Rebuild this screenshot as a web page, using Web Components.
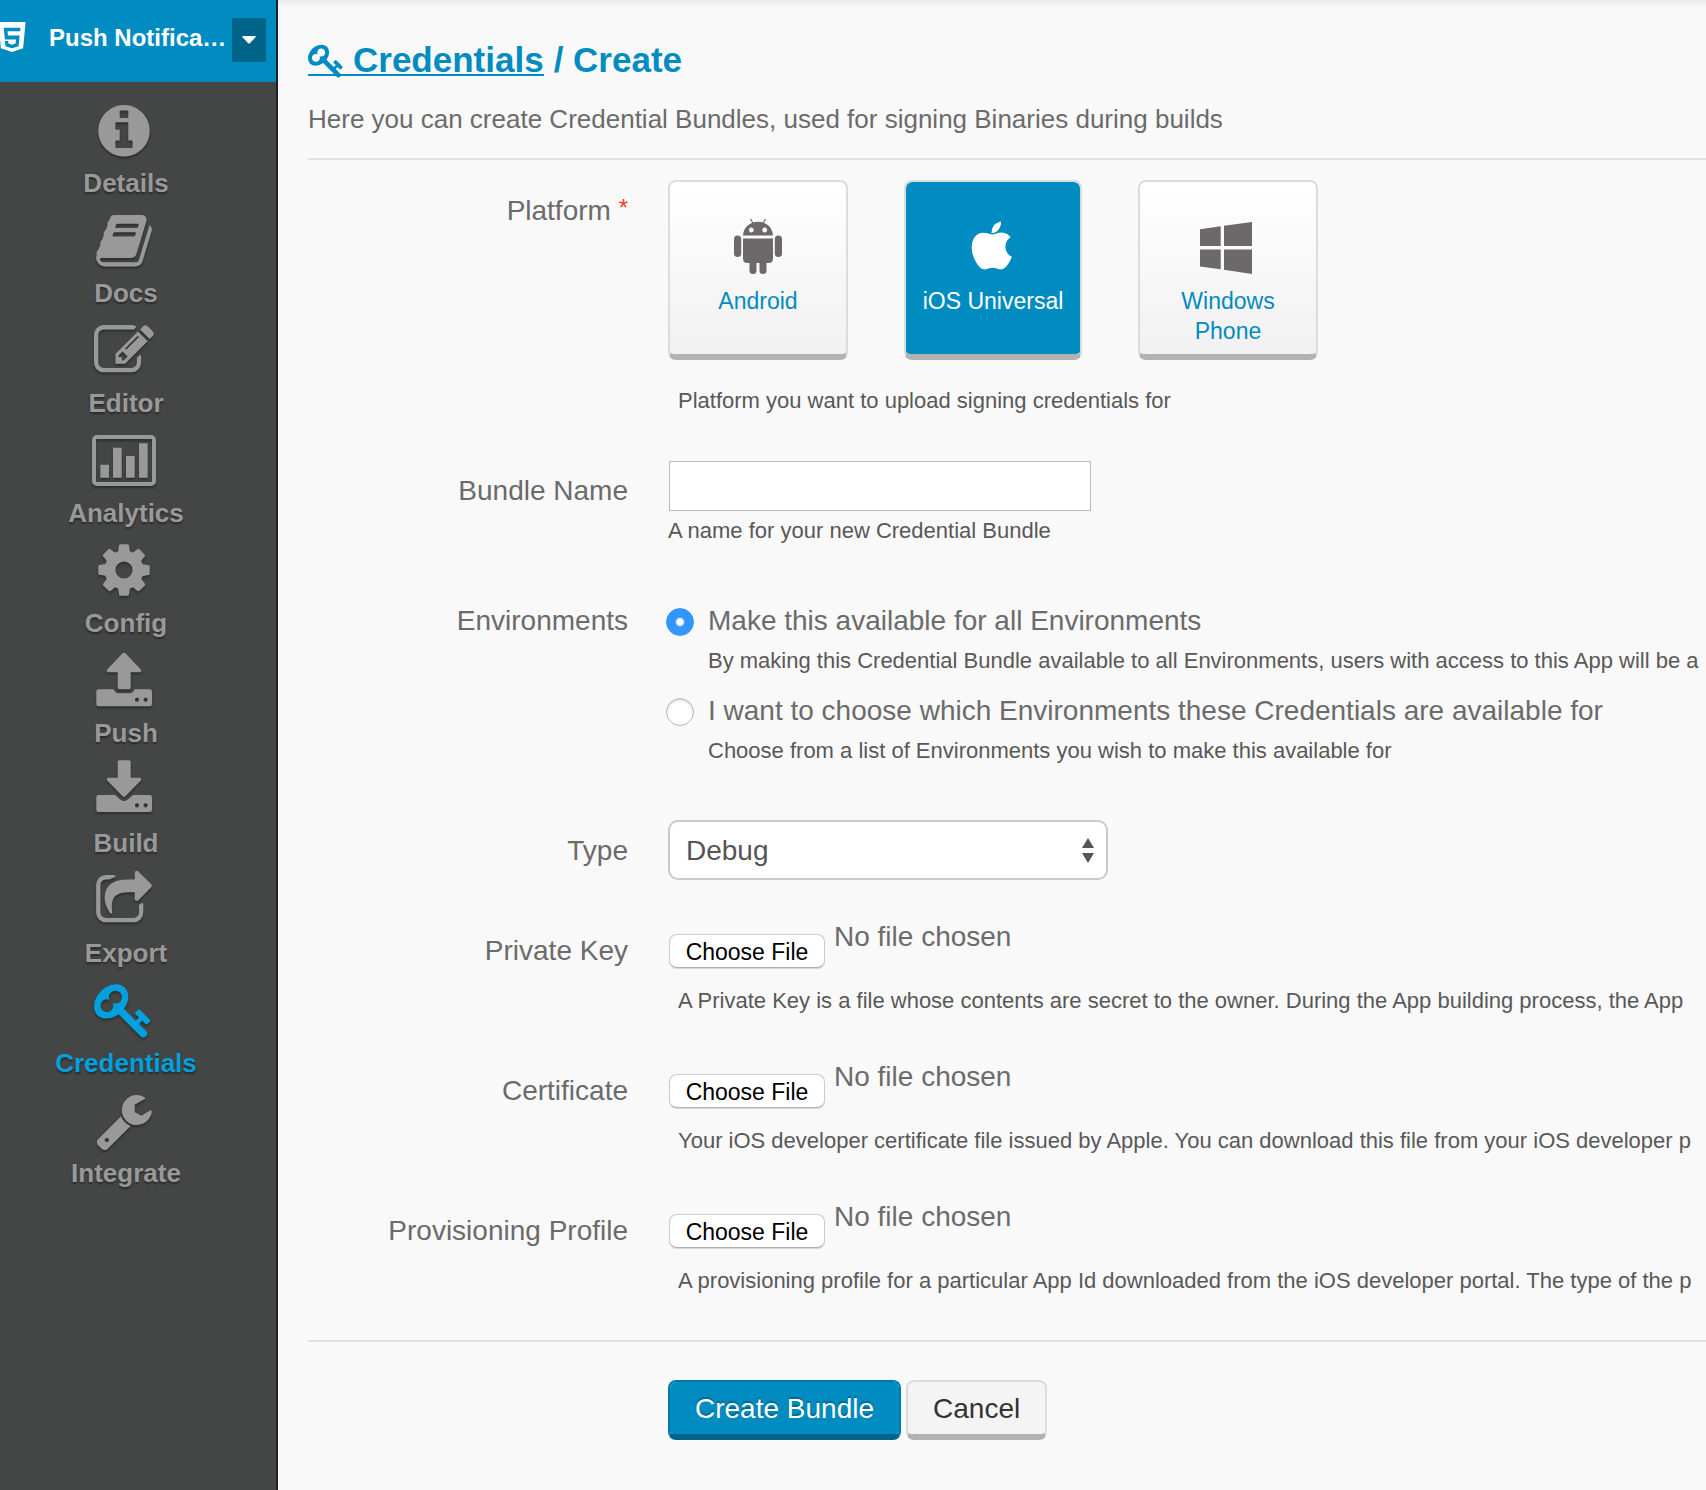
<!DOCTYPE html>
<html lang="en">
<head>
<meta charset="utf-8">
<title>Credentials / Create</title>
<style>
  html, body { margin: 0; }
  body { font-family: "Liberation Sans", Arial, sans-serif; background: #f9f9f9; color: #6b6b6b; }
</style>
</head>
<body>
<app-shell>
  <side-bar slot="side" name="Push Notifica…">
    <nav-item icon="info">Details</nav-item>
    <nav-item icon="book">Docs</nav-item>
    <nav-item icon="edit">Editor</nav-item>
    <nav-item icon="chart">Analytics</nav-item>
    <nav-item icon="cog">Config</nav-item>
    <nav-item icon="upload">Push</nav-item>
    <nav-item icon="download">Build</nav-item>
    <nav-item icon="share">Export</nav-item>
    <nav-item icon="key" current>Credentials</nav-item>
    <nav-item icon="wrench">Integrate</nav-item>
  </side-bar>
  <page-heading section="Credentials" page="Create">Here you can create Credential Bundles, used for signing Binaries during builds</page-heading>
  <credential-form></credential-form>
</app-shell>

<script>
const ICONS = {
  info: ['0 -24 1792 1792', '<path d="M1152 1376v-160q0-14-9-23t-23-9h-96v-512q0-14-9-23t-23-9h-320q-14 0-23 9t-9 23v160q0 14 9 23t23 9h96v320h-96q-14 0-23 9t-9 23v160q0 14 9 23t23 9h448q14 0 23-9t9-23zm-128-896v-160q0-14-9-23t-23-9h-192q-14 0-23 9t-9 23v160q0 14 9 23t23 9h192q14 0 23-9t9-23zm640 416q0 209-103 385.5t-279.5 279.5-385.5 103-385.5-103-279.5-279.5-103-385.5 103-385.5 279.5-279.5 385.5-103 385.5 103 279.5 279.5 103 385.5z"/>'],
  book: ['0 -24 1792 1792', '<path d="M1703 478q40 57 18 129l-275 906q-19 64-76.5 107.5t-122.5 43.5h-923q-77 0-148.5-53.5t-99.5-131.5q-24-67-2-127 0-4 3-27t4-37q1-8-3-21.5t-3-19.5q2-11 8-21t16.5-23.5 16.5-23.5q23-38 45-91.5t30-91.5q3-10 .5-30t-.5-28q3-11 17-28t17-23q21-36 42-92t25-90q1-9-2.5-32t.5-28q4-13 22-30.5t22-22.5q19-26 42.5-84.5t27.5-96.5q1-8-3-25.5t-2-26.5q2-8 9-18t18-23 17-21q8-12 16.5-30.5t15-35 16-36 19.5-32 26.5-23.5 36-11.5 47.5 5.5l-1 3q38-9 51-9h761q74 0 114 56t18 130l-274 906q-36 119-71.5 153.5t-128.5 34.5h-869q-27 0-38 15-11 16-1 43 24 70 144 70h923q29 0 56-15.5t35-41.5l300-987q7-22 5-57 38 15 59 43zm-1064 2q-4 13 2 22.5t20 9.5h608q13 0 25.5-9.5t16.5-22.5l21-64q4-13-2-22.5t-20-9.5h-608q-13 0-25.5 9.5t-16.5 22.5zm-83 256q-4 13 2 22.5t20 9.5h608q13 0 25.5-9.5t16.5-22.5l21-64q4-13-2-22.5t-20-9.5h-608q-13 0-25.5 9.5t-16.5 22.5z"/>'],
  edit: ['0 -24 1792 1792', '<path d="M888 1184l116-116-152-152-116 116v56h96v96h56zm440-720q-16-16-33 1l-350 350q-17 17-1 33t33-1l350-350q17-17 1-33zm80 594v190q0 119-84.5 203.5t-203.5 84.5h-832q-119 0-203.5-84.5t-84.5-203.5v-832q0-119 84.5-203.5t203.5-84.5h832q63 0 117 25 15 7 18 23 3 17-9 29l-49 49q-14 14-32 8-23-6-45-6h-832q-66 0-113 47t-47 113v832q0 66 47 113t113 47h832q66 0 113-47t47-113v-126q0-13 9-22l64-64q15-15 35-7t20 29zm-96-738l288 288-672 672h-288v-288zm444 132l-92 92-288-288 92-92q28-28 68-28t68 28l152 152q28 28 28 68t-28 68z"/>'],
  chart: ['0 0 64 60', '<rect x="2" y="7" width="60" height="47" rx="3" fill="none" stroke="currentColor" stroke-width="4"/><path d="M8.3 34.7h8.7v13H8.3zM21 17.7h8.7v30H21zM34 26h8.7v21.7H34zM47 13.3h8.7v34.4H47z"/>'],
  cog: ['0 0 1792 1792', '<path d="M1152 896q0-106-75-181t-181-75-181 75-75 181 75 181 181 75 181-75 75-181zm512-109v222q0 12-8 23t-20 13l-185 28q-19 54-39 91 35 50 107 138 10 12 10 25t-9 23q-27 37-99 108t-94 71q-12 0-26-9l-138-108q-44 23-91 38-16 136-29 186-7 28-36 28h-222q-14 0-24.5-8.5t-11.5-21.5l-28-184q-49-16-90-37l-141 107q-10 9-25 9-14 0-25-11-126-114-165-168-7-10-7-23 0-12 8-23 15-21 51-66.5t54-70.5q-27-50-41-99l-183-27q-13-2-21-12.5t-8-23.5v-222q0-12 8-23t19-13l186-28q14-46 39-92-40-57-107-138-10-12-10-24 0-10 9-23 26-36 98.5-107.5t94.5-71.5q13 0 26 10l138 107q44-23 91-38 16-136 29-186 7-28 36-28h222q14 0 24.5 8.5t11.5 21.5l28 184q49 16 90 37l142-107q9-9 24-9 13 0 25 10 129 119 165 170 7 8 7 22 0 12-8 23-15 21-51 66.5t-54 70.5q26 50 41 98l183 28q13 2 21 12.5t8 23.5z"/>'],
  upload: ['0 0 60 60', '<path d="M28.6 3.3q1.4-1.2 2.8 0L46.800 19.500q1.200 2-1 2.700H36.700V37.500q0 1.800-1.800 1.800H25.500q-1.800 0-1.800-1.800V22.200H14.200q-2.200-.7-1-2.700zM4.500 39.300H19.700q1.500 4 5 4H35.500q3.500 0 5-4H55.800q2.200 0 2.200 2.200V54q0 2.200-2.200 2.200H4.500Q2.300 56.200 2.300 54V41.500q0-2.200 2.200-2.200zM43 47.700a2.100 2.100 0 1 0 .01 0zM51.600 47.700a2.100 2.100 0 1 0 .01 0z"/>'],
  download: ['0 0 60 60', '<path d="M25.500.3H34.900q1.800 0 1.800 1.800V17.700H45.800q2.200.7 1 2.700L31.400 36.300q-1.400 1.200-2.800 0L13.200 20.400q-1.200-2 1-2.700H23.700V2.100q0-1.800 1.800-1.800zM4.500 35H21L26.500 39.700Q30 42.300 33.500 39.700L39.200 35H55.800Q58 35 58 37.200V49.800Q58 52 55.800 52H4.500Q2.300 52 2.300 49.800V37.200Q2.300 35 4.500 35zM43 43.300a2.100 2.100 0 1 0 .01 0zM51.600 43.300a2.100 2.100 0 1 0 .01 0z"/>'],
  share: ['0 -24 1792 1792', '<path d="M1472 989v259q0 119-84.5 203.5t-203.5 84.5h-832q-119 0-203.5-84.5t-84.5-203.5v-832q0-119 84.5-203.5t203.5-84.500h255q13 0 22.500 9.500t9.500 22.500q0 27-26 32-77 26-133 60-10 4-16 4h-112q-66 0-113 47t-47 113v832q0 66 47 113t113 47h832q66 0 113-47t47-113v-214q0-19 18-29 28-13 54-37 16-16 35-8 21 9 21 29zm237-496l-384 384q-18 19-45 19-12 0-25-5-39-17-39-59v-192h-160q-323 0-438 131-119 137-74 473 3 23-20 34-8 2-12 2-16 0-26-13-10-14-21-31t-39.500-68.500-49.500-99.500-38.500-114-17.500-122q0-49 3.500-91t14-90 28-88 47-81.500 68.500-74 94.500-61.500 124.500-48.500 159.500-30.500 196.500-11h160v-192q0-42 39-59 13-5 25-5 26 0 45 19l384 384q19 19 19 45t-19 45z"/>'],
  key: ['0 0 1792 1792', '<path d="M832 512q0-80-56-136t-136-56-136 56-56 136q0 42 19 83-41-19-83-19-80 0-136 56t-56 136 56 136 136 56 136-56 56-136q0-42-19-83 41 19 83 19 80 0 136-56t56-136zm851 704q0 17-49 66t-66 49q-9 0-28.500-16t-36.500-33-38.500-40-24.500-26l-96 96 220 220q28 28 28 68 0 42-39 81t-81 39q-40 0-68-28l-671-671q-176 131-365 131-163 0-265.500-102.500t-102.500-265.500q0-160 95-313t248-248 313-95q163 0 265.500 102.500t102.500 265.500q0 189-131 365l355 355 96-96q-3-3-26-24.500t-40-38.500-33-36.500-16-28.500q0-17 49-66t66-49q13 0 23 10 6 6 46 44.500t82 79.500 86.500 86 73 78 28.500 41z"/>'],
  wrench: ['0 -24 1792 1792', '<path d="M448 1472q0-26-19-45t-45-19-45 19-19 45 19 45 45 19 45-19 19-45zm644-420l-682 682q-37 37-90 37-52 0-91-37l-106-108q-38-36-38-90 0-53 38-91l681-681q39 98 114.500 173.500t173.500 114.500zm634-435q0 39-23 106-47 134-164.500 217.500t-258.500 83.500q-185 0-316.500-131.500t-131.500-316.500 131.500-316.500 316.500-131.500q58 0 121.500 16.500t107.500 46.500q16 11 16 28t-16 28l-293 169v224l193 107q5-3 79-48.500t135.500-81 70.500-35.500q15 0 23.500 10t8.500 25z"/>'],
  android: ['0 0 56 56', '<path d="M20.500 1l3 5M35.500 1l-3 5" stroke="currentColor" stroke-width="1.200" fill="none"/><path fill-rule="evenodd" d="M13 17.500C13.500 9 20 3.700 28 3.700S42.500 9 43 17.500zM21.300 9.600a2.400 2.400 0 1 0 .01 0zM34.700 9.600a2.400 2.400 0 1 0 .01 0z"/><path d="M13 20.500h30V40.500q0 4.500-4.500 4.500H36.500v7.500a3.500 3.500 0 0 1-7 0V45h-3v7.500a3.500 3.500 0 0 1-7 0V45H17.500Q13 45 13 40.500z"/><rect x="4" y="17.500" width="7.200" height="21.500" rx="3.600"/><rect x="44.800" y="17.500" width="7.200" height="21.500" rx="3.600"/>'],
  apple: ['-40 -124 1941 1941', '<path d="M1585 1215q-39 125-123 250-129 196-257 196-49 0-140-32-86-32-151-32-61 0-142 33-81 34-132 34-152 0-301-259-147-261-147-503 0-228 113-374 113-144 284-144 72 0 177 30 104 30 138 30 45 0 143-34 102-34 173-34 119 0 213 65 52 36 104 100-79 67-114 118-65 94-65 207 0 124 69 223t158 126zm-376-1173q0 61-29 136-30 75-93 138-54 54-108 72-37 11-104 17 3-149 78-257 74-107 250-148 1 3 2.500 11t2.500 11q0 4 .5 10t.5 10z"/>'],
  windows: ['2 0 56 56', '<path d="M2 11.200L22.700 8.300V28H2zM26 7.800L54 4V28H26zM2 31.500H22.700V51.300L2 48.500zM26 31.500H54V56L26 51.800z"/>'],
  html5: ['0 0 28 32', '<path fill-rule="evenodd" d="M0 0h28l-2.500 27L14 31 2.500 27zM5.500 6l1.200 12h11.500l-.5 4.200-3.700 1.200-3.700-1.200-.2-2.500H6.700l.5 5.300L14 27l6.800-2 1.100-11H9.800l-.4-4.400h13L22.700 6z"/>'],
  caret: ['0 0 14 8', '<path d="M1 0h12q1.200.3.500 1.300L7.800 7.300q-.8.600-1.600 0L.5 1.300Q-.2.300 1 0z"/>'],
  sort: ['0 0 12 25', '<path d="M6 0l6 10H0zM0 15h12L6 25z"/>']
};
const icon = (name, w, h) =>
  `<svg aria-hidden="true" width="${w}" height="${h}" viewBox="${ICONS[name][0]}" fill="currentColor">${ICONS[name][1]}</svg>`;

class Base extends HTMLElement {
  connectedCallback() {
    if (this.shadowRoot) return;
    this.attachShadow({ mode: 'open' }).innerHTML = this.render();
    this.ready();
  }
  ready() {}
}

customElements.define('app-shell', class extends Base {
  render() {
    return `<style>
      :host { display: flex; min-height: 100vh; }
      aside { flex: none; width: 276px; background: #444645; border-right: 2px solid #222; display: flex; }
      main { flex: 1; min-width: 0; overflow: hidden; box-sizing: border-box; padding: 44px 0 50px 30px;
        background: linear-gradient(#ebebeb, #f9f9f9 8px); }
    </style><aside><slot name="side"></slot></aside><main><slot></slot></main>`;
  }
});

customElements.define('side-bar', class extends Base {
  render() {
    return `<style>
      :host { display: block; flex: 1; min-width: 0; }
      header { display: flex; height: 82px; background: #008bc1; color: #fff; overflow: hidden; }
      .logo { flex: none; width: 50px; padding-top: 22px; margin-left: -2px; }
      .name { flex: 1; font-size: 24px; font-weight: bold; line-height: 32px; padding-top: 22px; white-space: nowrap; margin-left: 1px; }
      button { width: 34px; height: 44px; margin: 18px 10px 0 0; padding: 0; border: 0; background: #006489; color: #fff;
        display: flex; align-items: center; justify-content: center; }
      svg { display: block; }
      nav { padding-top: 18px; margin-right: 24px; }
    </style>
    <header><span class="logo">${icon('html5', 28, 31)}</span><span class="name">${this.getAttribute('name')}</span>
    <button type="button" aria-label="Switch app">${icon('caret', 14, 8)}</button></header>
    <nav><slot></slot></nav>`;
  }
});

customElements.define('nav-item', class extends Base {
  render() {
    const name = this.getAttribute('icon');
    return `<style>
      :host { display: block; color: #999; }
      :host([current]) { color: #00a0df; }
      a { display: flex; flex-direction: column; align-items: center; gap: 8px; padding-bottom: 12px; color: inherit; text-decoration: none;
        font-size: 26px; font-weight: bold; line-height: 30px; text-shadow: 0 2px 2px rgba(0,0,0,.4); }
      svg { display: block; margin-right: 4px; overflow: visible; filter: drop-shadow(0 2px 1px rgba(0,0,0,.35)); }
    </style><a href="#">${icon(name, name === 'chart' ? 64 : 60, 60)}<span><slot></slot></span></a>`;
  }
});

customElements.define('page-heading', class extends Base {
  render() {
    return `<style>
      :host { display: block; border-bottom: 2px solid #e2e2e2; padding-bottom: 23px; margin-bottom: 20px; }
      h1 { display: flex; gap: 10px; margin: 0 0 27px; font-size: 35px; line-height: 32px; color: #008bc1; }
      a { display: inline-flex; gap: 8px; height: 32px; color: inherit; text-decoration: none; box-shadow: inset 0 -2px #008bc1; }
      p { margin: 0; font-size: 26px; line-height: 32px; white-space: nowrap; }
      svg { display: block; margin: -2px 0; overflow: visible; }
    </style>
    <h1><a href="#">${icon('key', 37, 37)}<span>${this.getAttribute('section')}</span></a><span>/ ${this.getAttribute('page')}</span></h1>
    <p><slot></slot></p>`;
  }
});

customElements.define('field-row', class extends Base {
  render() {
    return `<style>
      :host { display: flex; gap: 40px; margin-bottom: 46px; font-size: 28px; line-height: 32px; }
      .label { flex: none; width: 320px; padding-top: 15px; text-align: right; white-space: nowrap; }
      .control { flex: 1; min-width: 0; }
    </style><div class="label"><slot name="label"></slot></div><div class="control"><slot></slot></div>`;
  }
});

customElements.define('help-text', class extends Base {
  render() {
    return `<style>:host { display: block; font-size: 22px; line-height: 28px; color: #585858; white-space: nowrap; }</style><slot></slot>`;
  }
});

customElements.define('platform-tile', class extends Base {
  render() {
    return `<style>
      :host { display: block; width: 180px; }
      :host([selected]) { width: 178px; }
      button { display: flex; flex-direction: column; align-items: center; gap: 12px; box-sizing: border-box; width: 100%; height: 180px;
        padding: 36px 14px 0; border: 2px solid #dcdcdc; border-bottom: 6px solid #b2b2b2; border-radius: 8px;
        background: linear-gradient(#fff, #f1f1f1) padding-box; color: #6b696a; }
      span { font: 23px/30px "Liberation Sans", Arial, sans-serif; color: #008bc1; }
      svg { display: block; }
      :host([selected]) button { background: #008bc1 padding-box; color: #fff; }
      :host([selected]) span { color: #fff; }
    </style><button type="button" aria-pressed="${this.hasAttribute('selected')}">${icon(this.getAttribute('icon'), 56, 56)}<span><slot></slot></span></button>`;
  }
});

customElements.define('file-picker', class extends Base {
  render() {
    return `<style>
      :host { display: flex; align-items: flex-start; gap: 9px; height: 50px; }
      button { margin: 14px 0 0 1px; height: 34px; width: 156px; padding: 1px 0 0; border: 1px solid #cdcdcd; border-bottom-color: #b0b0b0; border-radius: 8px;
        background: #fff; color: #000; font: 23px/30px "Liberation Sans", Arial, sans-serif; box-shadow: 0 1px 1px rgba(0,0,0,.15); }
      .name { padding-top: 1px; }
    </style><slot></slot><button type="button">Choose File</button><span class="name">No file chosen</span>`;
  }
  ready() {
    const input = this.querySelector('input');
    this.shadowRoot.querySelector('button').addEventListener('click', () => input.click());
    input.addEventListener('change', () => {
      this.shadowRoot.querySelector('.name').textContent = input.files.length ? input.files[0].name : 'No file chosen';
    });
  }
});

customElements.define('credential-form', class extends Base {
  render() {
    return `<style>
      :host { display: block; }
      form { margin: 0; }
      sup { font-size: 24px; line-height: 22px; color: #f0402a; vertical-align: 4px; }
      .tiles { display: flex; justify-content: space-between; width: 650px; margin-bottom: 27px; }
      .inset { margin: 0 0 -1px 10px; }
      .after-file { margin: 17px 0 -1px 10px; }
      input[type=text] { display: block; box-sizing: border-box; width: 422px; height: 50px; margin: 1px 1px 6px; padding: 0 12px; border: 1px solid #bbb;
        background: #fff; font: inherit; color: #555; }
      .bundle { margin-bottom: -1px; }
      .envs { padding-bottom: 9px; }
      .option { display: grid; grid-template-columns: 28px 1fr; column-gap: 14px; row-gap: 10px; margin: 15px 0 0 -2px; }
      .option + .option { margin-top: 20px; }
      .option help-text { grid-column: 2; }
      .option label { white-space: nowrap; }
      input[type=radio] { appearance: none; box-sizing: border-box; width: 28px; height: 28px; margin: 3px 0 0; border-radius: 50%; border: 1px solid #b4b4b4;
        background: #fff; box-shadow: inset 0 2px 2px rgba(0,0,0,.12); }
      input[type=radio]:checked { border-color: #3396ff; background: radial-gradient(circle, #fff 3px, #3396ff 5px); box-shadow: none; }
      .type { margin-bottom: 40px; }
      .select { display: grid; width: 440px; align-items: center; }
      .select > * { grid-area: 1 / 1; }
      .select svg { justify-self: end; margin-right: 14px; color: #555; pointer-events: none; }
      select { appearance: none; width: 100%; height: 60px; padding: 2px 40px 0 16px; border: 2px solid #cacaca; border-radius: 10px; background: #fff;
        font: inherit; color: #555; }
      .actions { display: flex; gap: 5px; border-top: 2px solid #e2e2e2; padding: 38px 0 0 360px; }
      .actions button { height: 60px; padding: 2px 25px 0; border: 2px solid #dcdcdc; border-bottom: 6px solid #b2b2b2; border-radius: 8px;
        background: #f4f4f4 padding-box; color: #333; font: 28px/32px "Liberation Sans", Arial, sans-serif; }
      .actions .primary { border-color: #007aab; border-bottom-color: #00638c; background: #008bc1 padding-box; color: #fff; text-shadow: 0 -2px 1px rgba(0,0,0,.25); }
    </style>
    <form onsubmit="return false">
      <field-row><span slot="label">Platform <sup>*</sup></span>
        <div class="tiles">
          <platform-tile icon="android">Android</platform-tile>
          <platform-tile icon="apple" selected>iOS Universal</platform-tile>
          <platform-tile icon="windows">Windows Phone</platform-tile>
        </div>
        <help-text class="inset">Platform you want to upload signing credentials for</help-text>
      </field-row>
      <field-row><label slot="label" for="bundle">Bundle Name</label>
        <input type="text" id="bundle">
        <help-text class="bundle">A name for your new Credential Bundle</help-text>
      </field-row>
      <field-row class="envs"><span slot="label" id="envs">Environments</span>
        <div role="radiogroup" aria-labelledby="envs">
          <div class="option"><input type="radio" name="env" id="env-all" checked><label for="env-all">Make this available for all Environments</label>
            <help-text>By making this Credential Bundle available to all Environments, users with access to this App will be a</help-text></div>
          <div class="option"><input type="radio" name="env" id="env-some"><label for="env-some">I want to choose which Environments these Credentials are available for</label>
            <help-text>Choose from a list of Environments you wish to make this available for</help-text></div>
        </div>
      </field-row>
      <field-row class="type"><label slot="label" for="type">Type</label>
        <div class="select"><select id="type"><option>Debug</option></select>${icon('sort', 12, 25)}</div>
      </field-row>
      <field-row><label slot="label" for="private-key">Private Key</label>
        <file-picker><input type="file" id="private-key" hidden></file-picker>
        <help-text class="after-file">A Private Key is a file whose contents are secret to the owner. During the App building process, the App</help-text>
      </field-row>
      <field-row><label slot="label" for="certificate">Certificate</label>
        <file-picker><input type="file" id="certificate" hidden></file-picker>
        <help-text class="after-file">Your iOS developer certificate file issued by Apple. You can download this file from your iOS developer p</help-text>
      </field-row>
      <field-row><label slot="label" for="profile">Provisioning Profile</label>
        <file-picker><input type="file" id="profile" hidden></file-picker>
        <help-text class="after-file">A provisioning profile for a particular App Id downloaded from the iOS developer portal. The type of the p</help-text>
      </field-row>
      <div class="actions"><button type="submit" class="primary">Create Bundle</button><button type="button">Cancel</button></div>
    </form>`;
  }
});
</script>
</body>
</html>
